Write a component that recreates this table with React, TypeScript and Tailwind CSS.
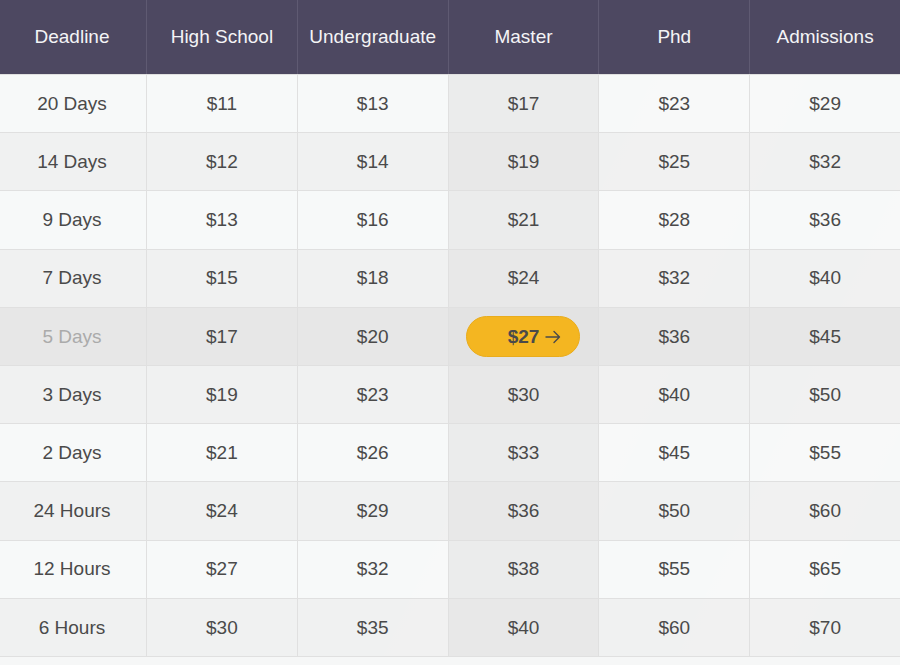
import React from 'react';

const HEADERS = ['Deadline', 'High School', 'Undergraduate', 'Master', 'Phd', 'Admissions'];

const ROWS: [string, number[]][] = [
  ['20 Days', [11, 13, 17, 23, 29]],
  ['14 Days', [12, 14, 19, 25, 32]],
  ['9 Days', [13, 16, 21, 28, 36]],
  ['7 Days', [15, 18, 24, 32, 40]],
  ['5 Days', [17, 20, 27, 36, 45]],
  ['3 Days', [19, 23, 30, 40, 50]],
  ['2 Days', [21, 26, 33, 45, 55]],
  ['24 Hours', [24, 29, 36, 50, 60]],
  ['12 Hours', [27, 32, 38, 55, 65]],
  ['6 Hours', [30, 35, 40, 60, 70]],
];

const ACTIVE_ROW = 4;
const ACTIVE_COL = 2;

export default function App() {
  return (
    <div
      className="h-[665px] w-[900px] overflow-hidden bg-[#f6f7f7]"
      style={{ fontFamily: '"Liberation Sans", Arial, sans-serif' }}
    >
      <div className="grid h-[74px] grid-cols-[146px_repeat(5,1fr)] bg-[#4d4861]">
        {HEADERS.map((h, i) => (
          <div
            key={h}
            className={
              'flex items-center justify-center text-[19px] text-[#f4f4f6] ' +
              (i > 0 ? 'border-l border-[#5f5a72]' : 'pr-[2px]')
            }
          >
            {h}
          </div>
        ))}
      </div>

      <div className="bg-[linear-gradient(115deg,transparent_0%,transparent_55%,rgba(255,255,255,0.45)_62%,transparent_70%,transparent_80%,rgba(255,255,255,0.35)_86%,transparent_92%)]">
        {ROWS.map(([label, prices], r) => {
          const active = r === ACTIVE_ROW;
          const rowBg = active ? 'bg-[#e7e7e7]' : r % 2 === 0 ? 'bg-[#f7f8f8]/90' : 'bg-[#efefef]/90';
          return (
            <div
              key={label}
              className={'grid h-[58.2px] grid-cols-[146px_repeat(5,1fr)] border-t border-[#e0e0e0] ' + rowBg}
            >
              <div
                className={
                  'flex items-center justify-center pr-[2px] pt-[1px] text-[19px] ' +
                  (active ? 'text-[#ababab]' : 'text-[#4a4a4a]')
                }
              >
                {label}
              </div>
              {prices.map((p, c) => (
                <div
                  key={c}
                  className={
                    'flex items-center justify-center border-l border-[#e0e0e0] pt-[1px] text-[19px] text-[#4a4a4a] ' +
                    (c === ACTIVE_COL && !active ? 'bg-[#e3e3e3]/60' : '') +
                    (c === ACTIVE_COL && active ? 'bg-[#e3e3e3]' : '')
                  }
                >
                  {active && c === ACTIVE_COL ? (
                    <div className="flex h-[41px] w-[114px] items-center justify-center gap-[6px] rounded-full border border-[#e9ac1d] bg-[#f4b621] pl-[22px] text-[19px] font-bold text-[#4a4a4a]">
                      <span>${p}</span>
                      <svg width="16" height="14" viewBox="0 0 16 14" fill="none" stroke="#4a4a4a" strokeWidth="1.4" strokeLinecap="round" strokeLinejoin="round">
                        <path d="M1 7h13.5M9 1.5 14.5 7 9 12.5" />
                      </svg>
                    </div>
                  ) : (
                    <span>${p}</span>
                  )}
                </div>
              ))}
            </div>
          );
        })}
        <div className="border-t border-[#e0e0e0]" />
      </div>
    </div>
  );
}
